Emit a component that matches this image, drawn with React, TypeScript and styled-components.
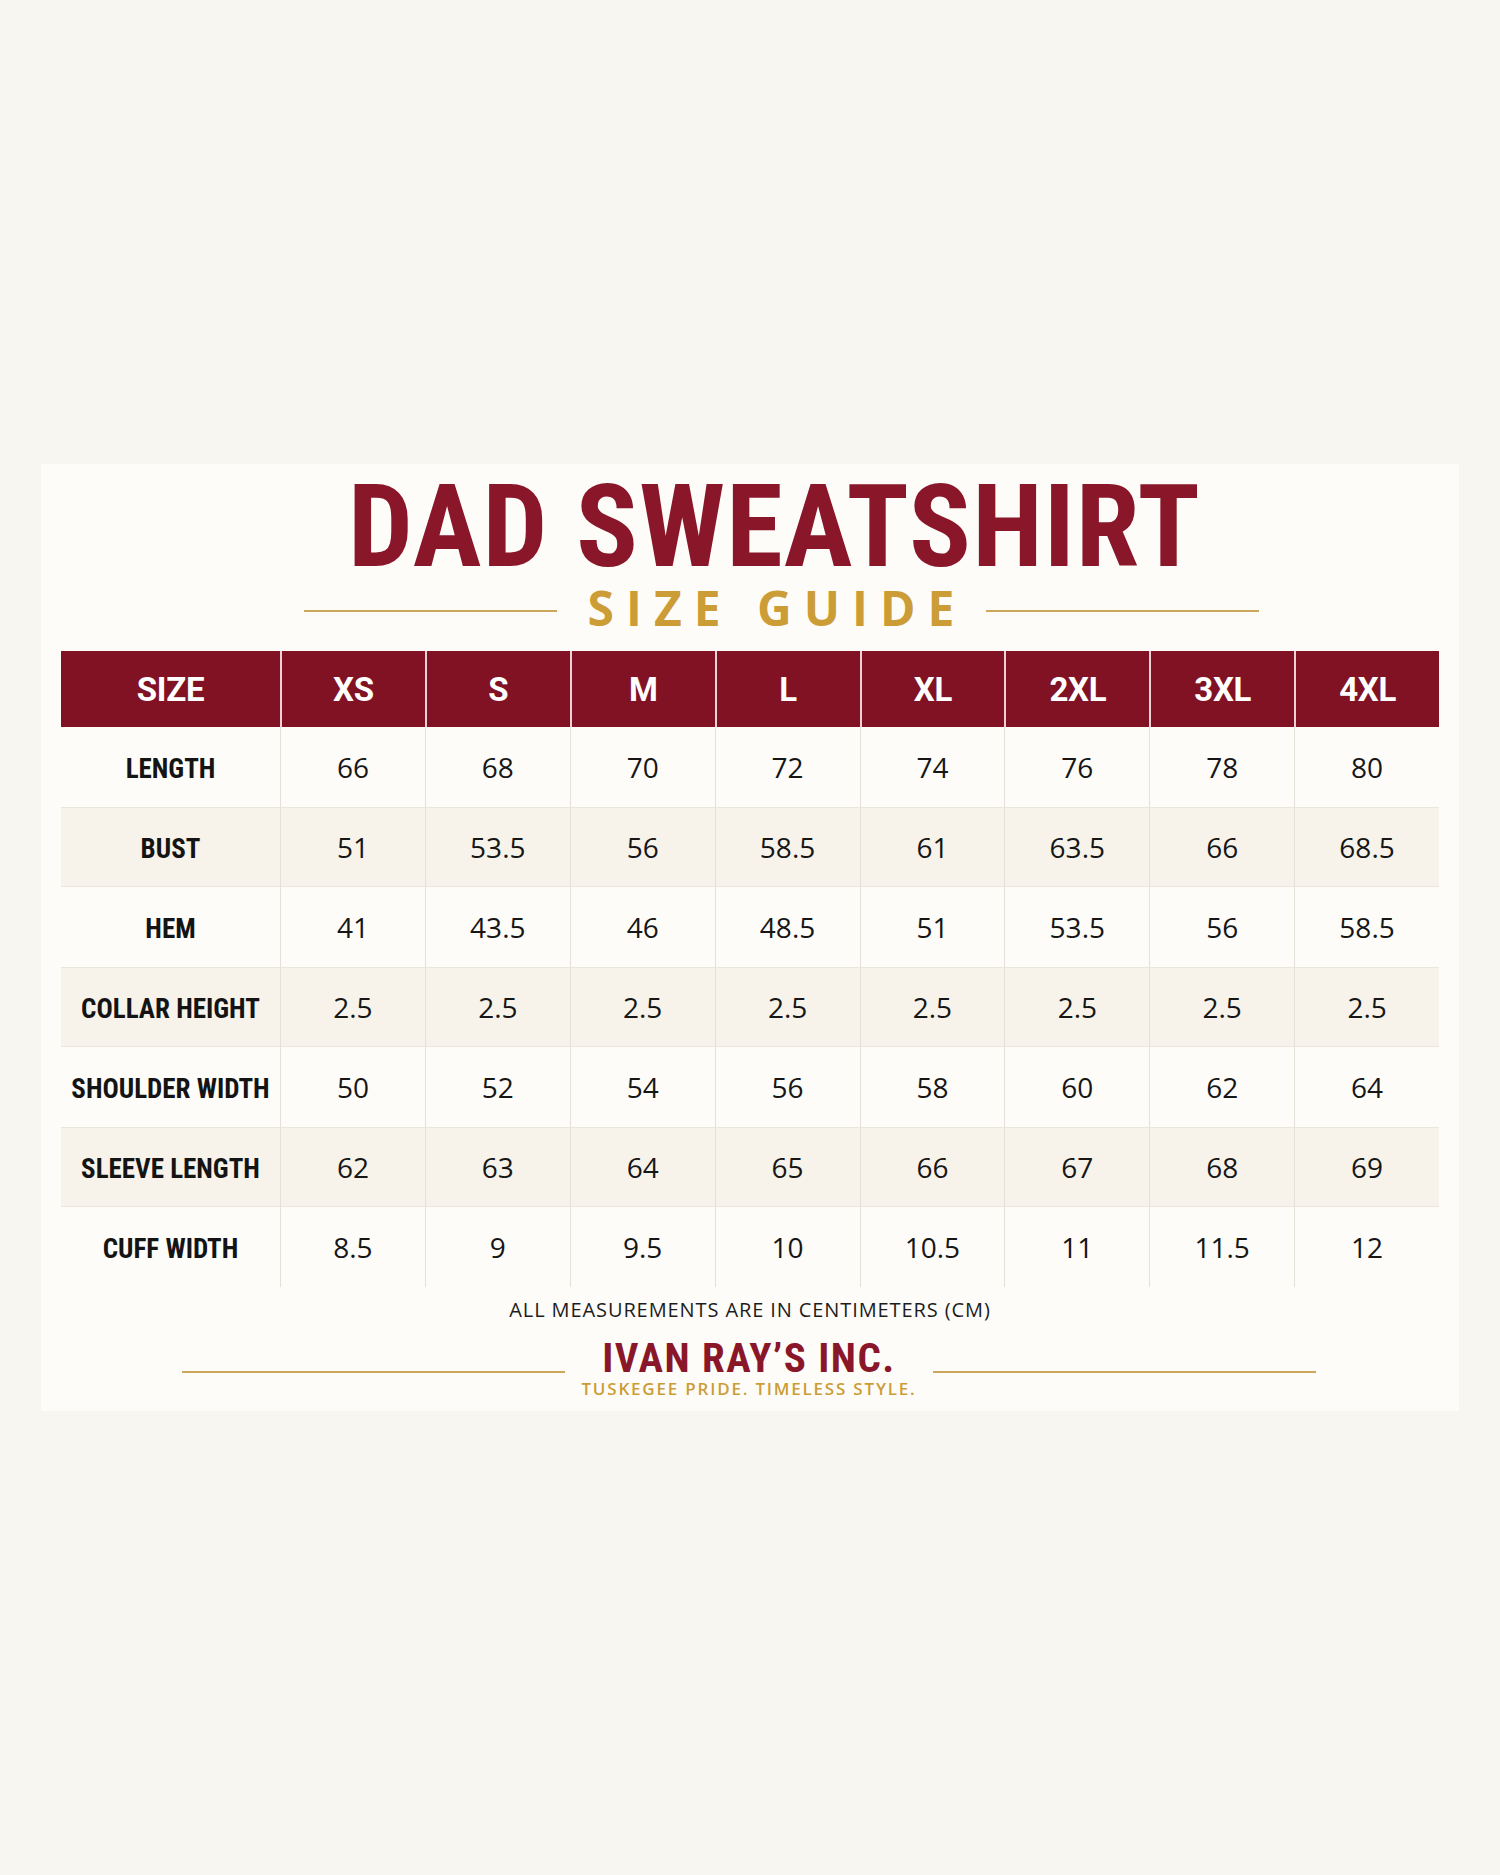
import styled, { createGlobalStyle } from 'styled-components';

const GlobalStyle = createGlobalStyle`
  html, body {
    margin: 0;
    padding: 0;
    background: #f8f6f1;
  }
  body {
    font-family: "Open Sans", "DejaVu Sans", sans-serif;
    color: #161616;
  }
`;

const maroon = '#801224';
const titleRed = '#8a1729';
const gold = '#cc9d36';
const condensed = '"Roboto Condensed", "Liberation Sans Narrow", "DejaVu Sans Condensed", "DejaVu Sans", sans-serif';

const Page = styled.div`
  min-height: 1875px;
  box-sizing: border-box;
  padding: 464px 41px 0;
`;

const Card = styled.section`
  background: #fdfcf9;
  padding: 0 20px 12px;
  display: flex;
  flex-direction: column;
  align-items: stretch;
`;

// heading block sits a little right of the card centre in the original
const Heading = styled.header`
  padding: 5px 0 0 49px;
  display: flex;
  flex-direction: column;
`;

const Title = styled.h1`
  margin: 0;
  text-align: center;
  font-family: ${condensed};
  font-stretch: condensed;
  font-weight: 700;
  font-size: 115px;
  line-height: 115px;
  letter-spacing: 1px;
  color: ${titleRed};
`;

const SubRow = styled.div`
  display: flex;
  align-items: center;
  justify-content: center;
  height: 48px;
  padding-left: 14px;
`;

const GoldRule = styled.div<{ $w: number }>`
  width: ${p => p.$w}px;
  height: 2px;
  margin-top: 6px;
  background: #cda85a;
`;

const SubTitle = styled.h2`
  margin: 0 20px 0 31px;
  font-family: "Open Sans", "DejaVu Sans", sans-serif;
  font-weight: 700;
  font-size: 48px;
  line-height: 48px;
  letter-spacing: 12px;
  color: ${gold};
  white-space: nowrap;
`;

const Table = styled.div`
  margin-top: 19px;
  display: flex;
  flex-direction: column;
`;

const cols = '219px repeat(8, 1fr)';

const HeadRow = styled.div`
  display: grid;
  grid-template-columns: ${cols};
  height: 76px;
  background: ${maroon};
`;

const HeadCell = styled.div<{ $first?: boolean }>`
  display: flex;
  align-items: center;
  justify-content: center;
  border-left: ${p => (p.$first ? 'none' : '2px solid #ecd2d5')};
  color: #fff;
  font-family: Roboto, "Open Sans", sans-serif;
  font-weight: 700;
  font-size: 33px;
  letter-spacing: -0.3px;
`;

const Row = styled.div<{ $alt: boolean }>`
  display: grid;
  grid-template-columns: ${cols};
  height: 80px;
  background: ${p => (p.$alt ? '#f7f3ea' : '#fdfcf9')};
  border-top: ${p => (p.$alt ? '1px solid #ebe6dc' : 'none')};
  border-bottom: ${p => (p.$alt ? '1px solid #ebe6dc' : 'none')};
  box-sizing: border-box;
`;

const LabelCell = styled.div`
  display: flex;
  align-items: center;
  justify-content: center;
  padding-top: 3px;
  font-family: ${condensed};
  font-stretch: condensed;
  font-weight: 700;
  font-size: 27px;
  color: #141414;
  white-space: nowrap;
`;

const ValueCell = styled.div`
  display: flex;
  align-items: center;
  justify-content: center;
  border-left: 1px solid #e6e1d8;
  font-family: "Open Sans", "DejaVu Sans", sans-serif;
  font-weight: 400;
  font-size: 28px;
  color: #161616;
`;

const Note = styled.p`
  margin: 9px 0 0;
  text-align: center;
  font-family: "Open Sans", "DejaVu Sans", sans-serif;
  font-size: 20px;
  line-height: 27px;
  letter-spacing: 0.9px;
  color: #1c1c1c;
`;

const BrandRow = styled.div`
  display: flex;
  align-items: center;
  gap: 16px;
  margin-top: 14px;
  padding: 0 123px 0 121px;
`;

const BrandRule = styled.div`
  flex: 1;
  height: 2px;
  margin-top: 8px;
  background: #cda85a;
`;

const Brand = styled.div`
  display: flex;
  flex-direction: column;
  align-items: center;
`;

const BrandName = styled.div`
  font-family: ${condensed};
  font-stretch: condensed;
  font-weight: 700;
  font-size: 41px;
  line-height: 42px;
  letter-spacing: 1.5px;
  color: ${titleRed};
`;

const Tagline = styled.div`
  font-family: "Open Sans", "DejaVu Sans", sans-serif;
  font-weight: 600;
  font-size: 17px;
  line-height: 20px;
  letter-spacing: 1.8px;
  color: ${gold};
`;

const sizes = ['XS', 'S', 'M', 'L', 'XL', '2XL', '3XL', '4XL'];

const rows: { label: string; values: string[] }[] = [
  { label: 'LENGTH', values: ['66', '68', '70', '72', '74', '76', '78', '80'] },
  { label: 'BUST', values: ['51', '53.5', '56', '58.5', '61', '63.5', '66', '68.5'] },
  { label: 'HEM', values: ['41', '43.5', '46', '48.5', '51', '53.5', '56', '58.5'] },
  { label: 'COLLAR HEIGHT', values: ['2.5', '2.5', '2.5', '2.5', '2.5', '2.5', '2.5', '2.5'] },
  { label: 'SHOULDER WIDTH', values: ['50', '52', '54', '56', '58', '60', '62', '64'] },
  { label: 'SLEEVE LENGTH', values: ['62', '63', '64', '65', '66', '67', '68', '69'] },
  { label: 'CUFF WIDTH', values: ['8.5', '9', '9.5', '10', '10.5', '11', '11.5', '12'] },
];

export default function App() {
  return (
    <>
      <GlobalStyle />
      <Page>
        <Card>
          <Heading>
            <Title>DAD SWEATSHIRT</Title>
            <SubRow>
              <GoldRule $w={253} />
              <SubTitle>SIZE GUIDE</SubTitle>
              <GoldRule $w={273} />
            </SubRow>
          </Heading>

          <Table>
            <HeadRow>
              <HeadCell $first>SIZE</HeadCell>
              {sizes.map(s => (
                <HeadCell key={s}>{s}</HeadCell>
              ))}
            </HeadRow>
            {rows.map((r, i) => (
              <Row key={r.label} $alt={i % 2 === 1}>
                <LabelCell>{r.label}</LabelCell>
                {r.values.map((v, j) => (
                  <ValueCell key={j}>{v}</ValueCell>
                ))}
              </Row>
            ))}
          </Table>

          <Note>ALL MEASUREMENTS ARE IN CENTIMETERS (CM)</Note>

          <BrandRow>
            <BrandRule />
            <Brand>
              <BrandName>IVAN RAY’S INC.</BrandName>
              <Tagline>TUSKEGEE PRIDE. TIMELESS STYLE.</Tagline>
            </Brand>
            <BrandRule />
          </BrandRow>
        </Card>
      </Page>
    </>
  );
}
